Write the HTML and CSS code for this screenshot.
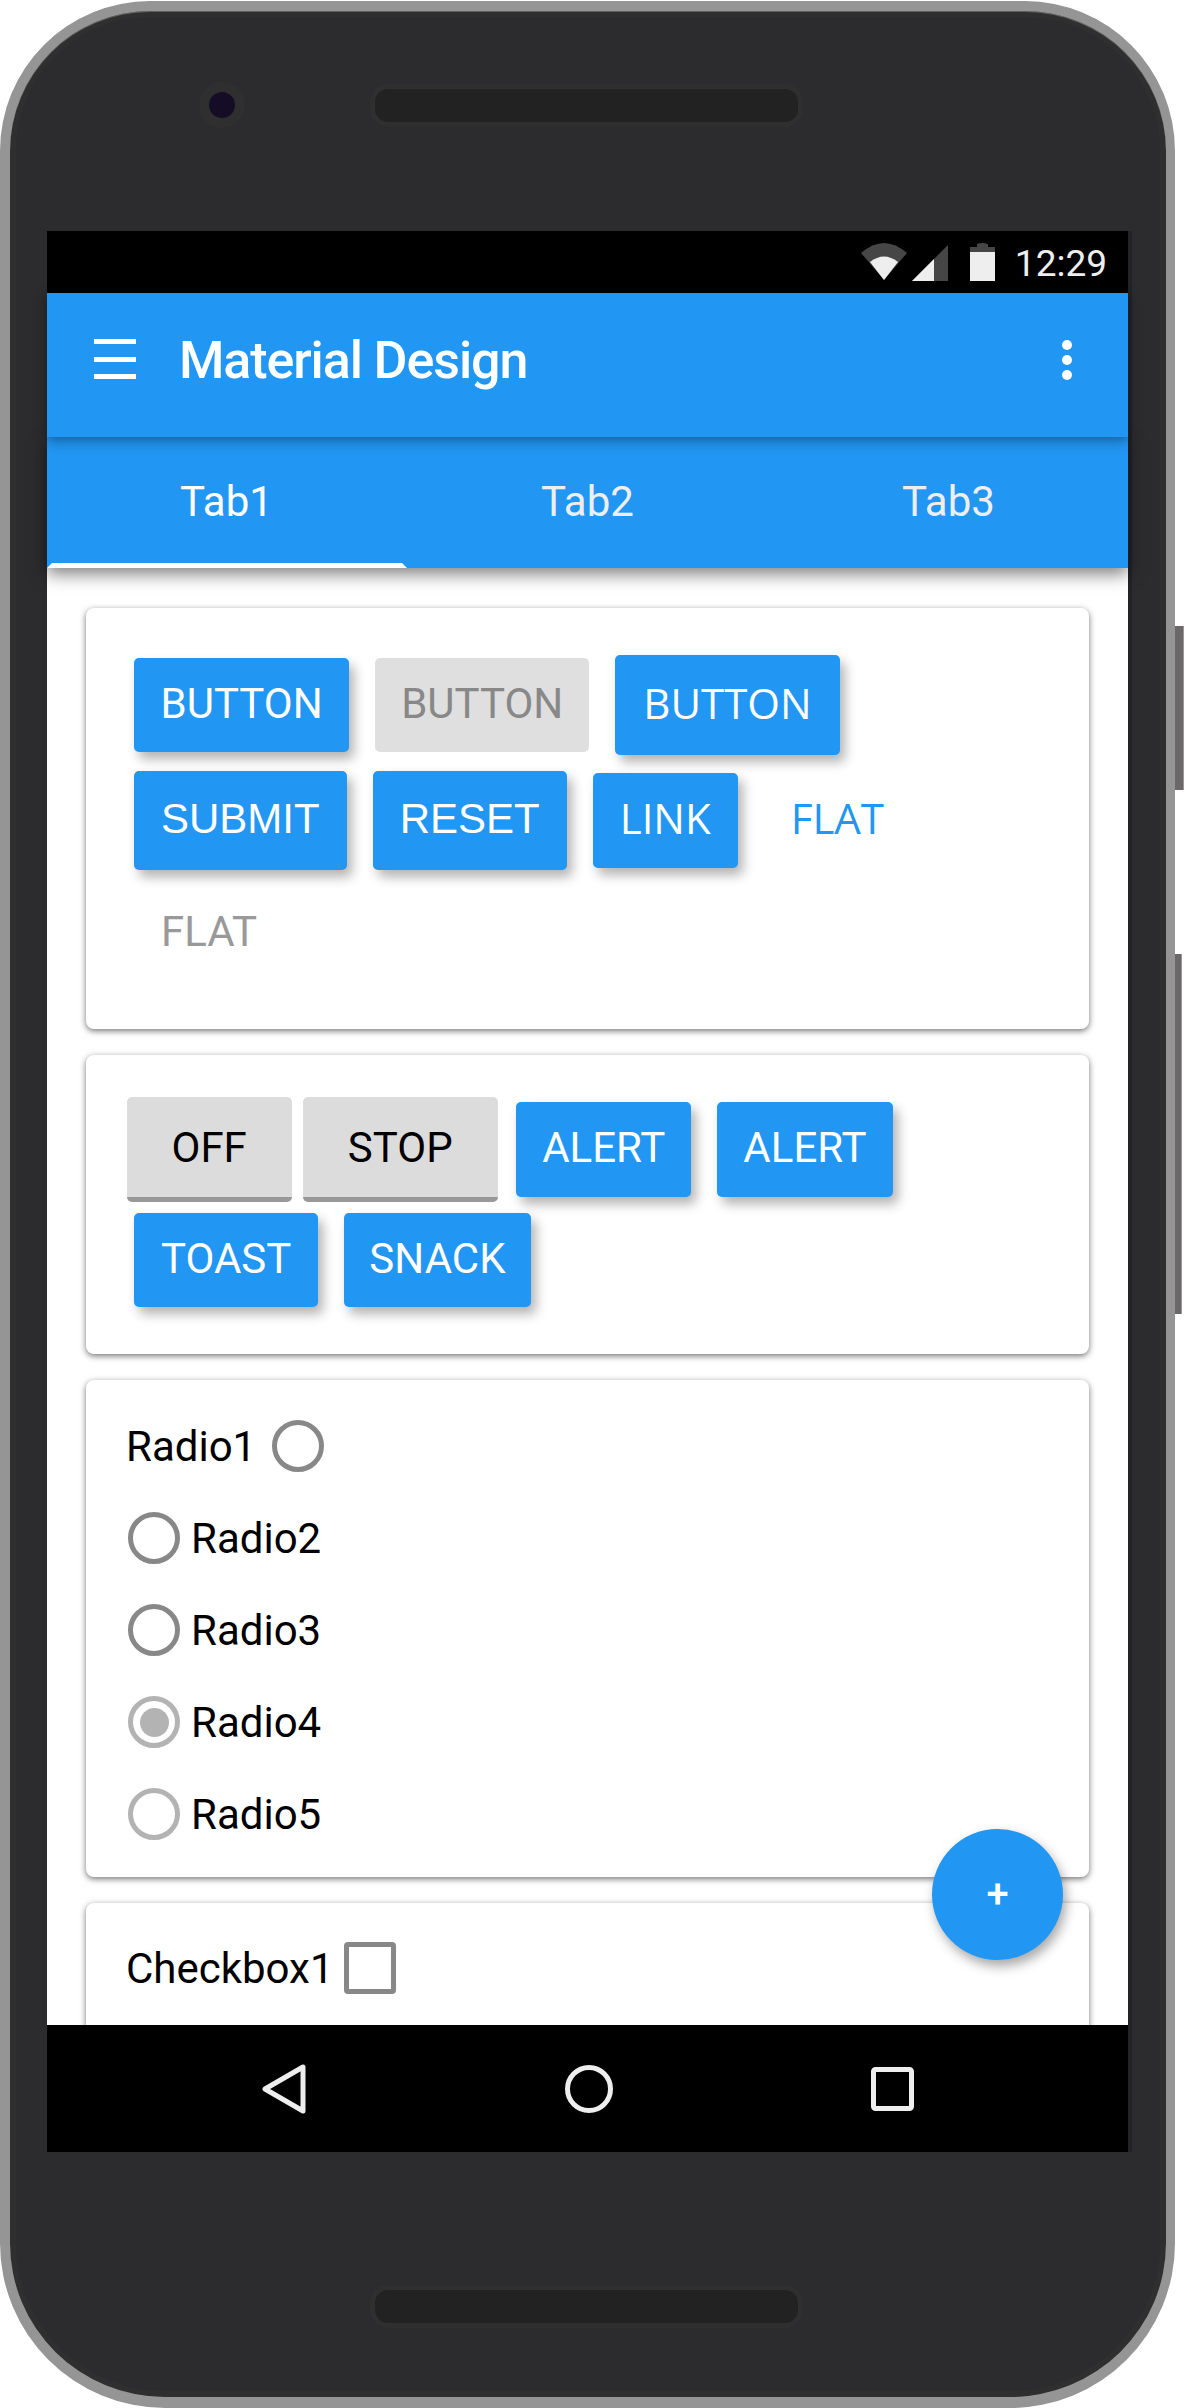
FILE: index.html
```html
<!DOCTYPE html>
<html>
<head>
<title>Material Design</title>
<link rel="stylesheet" href="styles.css">
</head>
<body>

<div class="device">
  <div class="phone">
    <div class="bezel-top">
      <div class="camera"><div class="lens"></div></div>
      <div class="speaker"></div>
    </div>

    <div class="screen">
      <div class="status-bar">
        <svg class="status-icon" width="46" height="37" viewBox="0 0 46 37">
          <path d="M0 10Q23-10 46 10L23 37Z" fill="#464646"/>
          <path d="M9 19Q23 8 37 19L23 37Z" fill="#eee"/>
        </svg>
        <svg class="status-icon signal" width="36" height="36" viewBox="0 0 36 36">
          <path d="M0 36L36 0V36Z" fill="#464646"/>
          <path d="M0 36L22 14V36Z" fill="#eee"/>
        </svg>
        <svg class="status-icon battery" width="25" height="38" viewBox="0 0 25 38">
          <path d="M0 9V4H7V1Q12-1 18 1V4H25V9Z" fill="#464646"/>
          <rect y="9" width="25" height="29" fill="#eee"/>
        </svg>
        <span class="clock">12:29</span>
      </div>

      <div class="app-bar">
        <div class="menu-icon"><span></span><span></span><span></span></div>
        <div class="app-title">Material Design</div>
        <div class="more-icon"><span></span><span></span><span></span></div>
      </div>

      <div class="tabs">
        <div class="tab active">Tab1</div>
        <div class="tab">Tab2</div>
        <div class="tab">Tab3</div>
      </div>

      <div class="content">
        <div class="card card-buttons">
          <div class="btn-group">
            <button class="btn btn-compact">BUTTON</button>
            <button class="btn disabled">BUTTON</button>
            <button class="btn btn-large">BUTTON</button>
            <input class="btn btn-tall" type="submit" value="SUBMIT">
            <input class="btn btn-tall" type="reset" value="RESET">
            <a class="btn btn-link">LINK</a>
            <button class="btn flat">FLAT</button>
            <button class="btn flat flat-disabled">FLAT</button>
          </div>
        </div>

        <div class="card card-toggles">
          <div class="btn-group">
            <button class="toggle">OFF</button>
            <button class="toggle">STOP</button>
            <button class="btn btn-alert">ALERT</button>
            <button class="btn btn-alert">ALERT</button>
            <button class="btn">TOAST</button>
            <button class="btn btn-narrow">SNACK</button>
          </div>
        </div>

        <div class="card card-radios">
          <div class="option"><span class="label-first">Radio1</span><span class="radio"></span></div>
          <div class="option"><span class="radio"></span><span>Radio2</span></div>
          <div class="option"><span class="radio"></span><span>Radio3</span></div>
          <div class="option"><span class="radio checked"></span><span>Radio4</span></div>
          <div class="option"><span class="radio muted"></span><span>Radio5</span></div>
        </div>

        <div class="card card-checks">
          <div class="option check-option"><span class="label-first">Checkbox1</span><span class="checkbox"></span></div>
        </div>

        <button class="fab">+</button>
      </div>

      <div class="nav-bar">
        <svg class="nav-back" width="44" height="50" viewBox="0 0 44 50">
          <path d="M41 3V47L3 25Z"/>
        </svg>
        <svg class="nav-home" width="48" height="50" viewBox="0 0 48 50">
          <circle cx="24" cy="25" r="21.5"/>
        </svg>
        <svg class="nav-recent" width="43" height="44" viewBox="0 0 43 44">
          <rect x="2.5" y="2.5" width="38" height="39" rx="2"/>
        </svg>
      </div>
    </div>

    <div class="bezel-bottom">
      <div class="speaker speaker-bottom"></div>
    </div>
  </div>

  <div class="side-keys">
    <div class="key key-power"></div>
    <div class="key key-volume"></div>
  </div>
</div>

</body>
</html>
```

FILE: styles.css
```css
body {
  margin: 0;
  background-color: white;
  font-family: Roboto, "Liberation Sans", sans-serif;
  color: black;
}

.device {
  display: flex;
  align-items: flex-start;
  padding-top: 1px;
}

/* Phone frame */
.phone {
  width: 1175px;
  height: 2407px;
  box-sizing: border-box;
  flex-shrink: 0;
  background-color: #2c2b2d;
  border-style: solid;
  border-color: #959595;
  border-width: 10px 9px 11px 10px;
  border-radius: 150px 150px 165px 165px;
  box-shadow: inset 0 1px 0 #5f5f5f, inset 0 0 0 6px #2f2f2f;
}

.bezel-top {
  height: 220px;
  box-sizing: border-box;
  padding-top: 71px;
  display: flex;
  align-items: flex-start;
}

.camera {
  width: 46px;
  height: 46px;
  margin-left: 189px;
  border-radius: 50%;
  background-color: #2f2f2f;
  display: flex;
  align-items: center;
  justify-content: center;
}

.lens {
  width: 26px;
  height: 26px;
  border-radius: 50%;
  background-color: #150d26;
}

.speaker {
  width: 423px;
  height: 33px;
  margin: 2px 0 0 125px;
  border: 5px solid #2f2f2f;
  border-radius: 18px;
  background-color: #232222;
}

.bezel-bottom {
  height: 244px;
  box-sizing: border-box;
  padding-top: 133px;
}

.speaker-bottom {
  margin: 0 0 0 360px;
}

.side-keys {
  display: flex;
  flex-direction: column;
  padding-top: 625px;
}

.key {
  background-color: #6a6868;
  border-right: 1px solid #999;
}

.key-power {
  width: 8px;
  height: 164px;
}

.key-volume {
  width: 6px;
  height: 360px;
  margin-top: 164px;
}

/* Screen */
.screen {
  height: 1921px;
  margin: 0 38px 0 37px;
  display: flex;
  flex-direction: column;
  background-color: white;
  box-shadow: 4px 0 0 #232323;
}

.status-bar {
  height: 62px;
  flex-shrink: 0;
  background-color: black;
  display: flex;
  align-items: flex-start;
  padding: 12px 21px 0 0;
  box-sizing: border-box;
  justify-content: flex-end;
}

.status-icon {
  display: block;
}

.signal {
  margin: 2px 0 0 5px;
}

.battery {
  margin-left: 22px;
}

.clock {
  margin-left: 20px;
  font-size: 37px;
  line-height: 42px;
  color: #eee;
}

.app-bar {
  height: 144px;
  flex-shrink: 0;
  background-color: #2196f3;
  display: flex;
  align-items: center;
  color: white;
  position: relative;
  z-index: 2;
  box-shadow: 0 3px 12px rgba(0, 0, 0, 0.4);
}

.menu-icon {
  width: 42px;
  height: 40px;
  margin: 0 0 12px 47px;
  display: flex;
  flex-direction: column;
  justify-content: space-between;
}

.menu-icon span {
  display: block;
  height: 5px;
  background-color: white;
}

.app-title {
  margin-left: 43px;
  padding-bottom: 10px;
  flex-grow: 1;
  font-size: 52px;
  font-weight: 500;
  letter-spacing: -1.1px;
}

.more-icon {
  margin: 0 56px 10px 0;
  display: flex;
  flex-direction: column;
  gap: 5px;
}

.more-icon span {
  display: block;
  width: 10px;
  height: 10px;
  border-radius: 50%;
  background-color: white;
}

.tabs {
  height: 131px;
  flex-shrink: 0;
  background-color: #2196f3;
  display: flex;
  position: relative;
  z-index: 1;
  box-shadow: 0 6px 16px rgba(0, 0, 0, 0.5);
}

.tab {
  width: 361px;
  flex-shrink: 0;
  box-sizing: border-box;
  padding: 0 2px 2px 0;
  display: flex;
  align-items: center;
  justify-content: center;
  font-size: 42px;
  color: #eee;
  position: relative;
}

.tab.active {
  color: white;
}

.tab.active::after {
  content: "";
  position: absolute;
  left: 0;
  right: 1px;
  bottom: 0;
  height: 5px;
  background-color: white;
  clip-path: polygon(5px 0, calc(100% - 5px) 0, 100% 100%, 0 100%);
}

/* Content */
.content {
  flex-grow: 1;
  min-height: 0;
  overflow: hidden;
  position: relative;
  padding: 40px 39px 0;
  display: flex;
  flex-direction: column;
  gap: 26px;
}

.card {
  flex-shrink: 0;
  background-color: white;
  border-radius: 8px;
  box-shadow: 0 2px 6px rgba(0, 0, 0, 0.55);
}

.card-buttons {
  padding: 47px 35px 49px;
}

.card-buttons .btn-group {
  row-gap: 16px;
}

.card-toggles {
  padding: 42px 35px 47px;
}

.card-toggles .btn-group {
  row-gap: 11px;
}

.card-radios {
  padding: 20px 42px 17px;
}

.card-checks {
  padding: 39px 42px;
}

.btn-group {
  display: flex;
  flex-wrap: wrap;
  align-items: center;
}

.btn {
  height: 94px;
  margin: 0 13px;
  padding: 0 27px 4px;
  box-sizing: border-box;
  display: flex;
  align-items: center;
  border: none;
  border-radius: 5px;
  background-color: #2196f3;
  color: white;
  font-family: inherit;
  font-size: 42px;
  box-shadow: 5px 7px 12px rgba(0, 0, 0, 0.3);
}

.btn-compact {
  padding: 0 26.5px 4px;
}

.btn-large {
  height: 100px;
  padding: 0 28px 6px;
  font-family: "Open Sans", sans-serif;
}

.btn-narrow {
  padding: 0 25px 4px;
}

.btn-tall {
  height: 99px;
  font-family: "Liberation Sans", sans-serif;
}

.btn-link {
  height: 95px;
  padding: 0 27px 6px;
  font-family: "Open Sans", sans-serif;
}

.btn-alert {
  height: 95px;
  padding: 0 26px 4px;
}

.btn.disabled {
  padding: 0 26px 4px;
  background-color: #dfdfdf;
  color: #888;
  box-shadow: none;
}

.btn.flat {
  padding-bottom: 6px;
  background-color: transparent;
  color: #2196f3;
  font-family: "Open Sans", sans-serif;
  box-shadow: none;
}

.btn.flat-disabled {
  padding-bottom: 4px;
  color: #999;
  font-family: inherit;
}

.toggle {
  height: 105px;
  margin: 0 5.5px;
  padding: 0 45px;
  box-sizing: border-box;
  border: none;
  border-bottom: 5px solid #999;
  border-radius: 5px;
  background-color: #dcdcdc;
  color: black;
  font-family: inherit;
  font-size: 42px;
}

.option {
  height: 92px;
  display: flex;
  align-items: center;
  gap: 11px;
  font-size: 42px;
}

.label-first {
  margin: 0 5px 0 -2px;
}

.radio {
  width: 52px;
  height: 52px;
  box-sizing: border-box;
  border: 5px solid #888;
  border-radius: 50%;
  display: flex;
  align-items: center;
  justify-content: center;
}

.radio.muted,
.radio.checked {
  border-color: #b3b3b3;
}

.radio.checked::before {
  content: "";
  width: 29px;
  height: 29px;
  border-radius: 50%;
  background-color: #b3b3b3;
}

.check-option {
  height: 52px;
}

.check-option .label-first {
  margin-right: -1px;
}

.checkbox {
  width: 52px;
  height: 52px;
  box-sizing: border-box;
  border: 5px solid #888;
  border-radius: 4px;
}

.fab {
  position: absolute;
  right: 65px;
  bottom: 65px;
  width: 131px;
  height: 131px;
  border: none;
  border-radius: 50%;
  background-color: #2196f3;
  color: white;
  font-family: inherit;
  font-size: 40px;
  font-weight: 500;
  box-shadow: 3px 6px 12px rgba(0, 0, 0, 0.35);
}

/* Bottom navigation */
.nav-bar {
  height: 127px;
  flex-shrink: 0;
  background-color: black;
  display: flex;
  align-items: center;
  padding-left: 215px;
  position: relative;
  z-index: 1;
}

.nav-bar svg {
  fill: none;
  stroke: #eee;
  stroke-width: 5;
  stroke-linejoin: round;
}

.nav-home {
  margin-left: 259px;
}

.nav-recent {
  margin-left: 258px;
}
```
